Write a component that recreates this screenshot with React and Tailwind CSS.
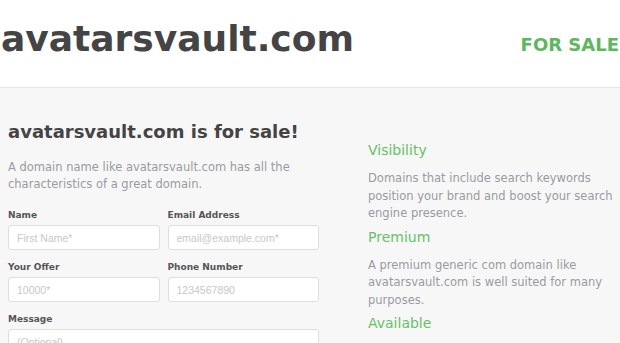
export default function App() {
  const font = { fontFamily: '"DejaVu Sans", Verdana, sans-serif' };
  return (
    <div className="w-[620px] h-[343px] overflow-hidden bg-[#f7f7f7]" style={font}>
      {/* Header */}
      <header className="h-[88px] bg-white border-b border-[#e6e6e6] flex items-start justify-between">
        <h1 className="mt-[17px] ml-[1px] text-[36px] leading-[44px] font-bold text-[#444] whitespace-nowrap">
          avatarsvault.com
        </h1>
        <span className="mt-[34px] mr-[1px] text-[18px] leading-[22px] font-bold text-[#5cb85c] whitespace-nowrap">
          FOR SALE
        </span>
      </header>

      <main className="flex">
        {/* Left: form */}
        <section className="ml-[8px] w-[311px]">
          <h2 className="mt-[32px] text-[18px] leading-[24px] font-bold text-[#444] whitespace-nowrap">
            avatarsvault.com is for sale!
          </h2>
          <p className="mt-[15px] text-[11.5px] leading-[17px] text-[#999ba3]">
            A domain name like avatarsvault.com has all the characteristics of a great domain.
          </p>

          <form className="mt-[16px] grid grid-cols-2 gap-x-[8px]">
            <Field label="Name" placeholder="First Name*" />
            <Field label="Email Address" placeholder="email@example.com*" />
            <Field label="Your Offer" placeholder="10000*" />
            <Field label="Phone Number" placeholder="1234567890" />
            <div className="col-span-2">
              <label className="block text-[9px] leading-[12px] font-bold text-[#555]">Message</label>
              <textarea
                rows={3}
                placeholder="(Optional)"
                className="mt-[4px] block w-full h-[60px] rounded-[3px] border border-[#dedede] bg-white px-[8px] py-[5px] text-[10.5px] text-[#555] placeholder:text-[#c8c8c8] resize-none outline-none"
                style={{ fontFamily: '"Liberation Sans", Arial, sans-serif' }}
              />
            </div>
          </form>
        </section>

        {/* Right: features */}
        <aside className="ml-[49px] w-[246px] mt-[52px]">
          <Feature
            title="Visibility"
            text="Domains that include search keywords position your brand and boost your search engine presence."
          />
          <Feature
            title="Premium"
            text="A premium generic com domain like avatarsvault.com is well suited for many purposes."
          />
          <Feature title="Available" text="" />
        </aside>
      </main>
    </div>
  );
}

function Field({ label, placeholder }) {
  return (
    <div className="mb-[11px]">
      <label className="block text-[9px] leading-[12px] font-bold text-[#555]">{label}</label>
      <input
        type="text"
        placeholder={placeholder}
        className="mt-[4px] block w-full h-[25px] rounded-[3px] border border-[#dedede] bg-white px-[8px] text-[10.5px] text-[#555] placeholder:text-[#c8c8c8] outline-none"
        style={{ fontFamily: '"Liberation Sans", Arial, sans-serif' }}
      />
    </div>
  );
}

function Feature({ title, text }) {
  return (
    <div className="mb-[4px]">
      <h3 className="text-[14px] leading-[20px] text-[#66c266]">{title}</h3>
      {text && <p className="mt-[10px] text-[11.5px] leading-[17.5px] text-[#999ba3]">{text}</p>}
    </div>
  );
}
